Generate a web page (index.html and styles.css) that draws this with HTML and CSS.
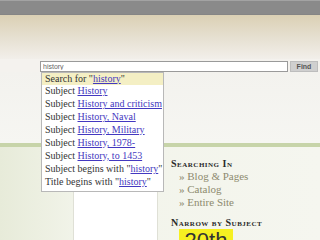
FILE: index.html
```html
<!DOCTYPE html>
<html lang="en">
<head>
<meta charset="UTF-8" />
<meta name="viewport" content="width=device-width, initial-scale=1" />
<title>Library Search</title>
<link rel="stylesheet" href="styles.css">
</head>
<body>
<div class="topbar"></div>
<div class="header"></div>
<form class="search">
  <div class="field">
    <input type="text" class="query" value="history" />
    <ul class="suggest">
      <li class="active">Search for "<a href="#">history</a>"</li>
      <li>Subject <a href="#">History</a></li>
      <li>Subject <a href="#">History and criticism</a></li>
      <li>Subject <a href="#">History, Naval</a></li>
      <li>Subject <a href="#">History, Military</a></li>
      <li>Subject <a href="#">History, 1978-</a></li>
      <li>Subject <a href="#">History, to 1453</a></li>
      <li>Subject begins with "<a href="#">history</a>"</li>
      <li>Title begins with "<a href="#">history</a>"</li>
    </ul>
  </div>
  <button type="button" class="find">Find</button>
</form>
<div class="upper"></div>
<div class="band"></div>
<div class="lower">
  <div class="gutter"></div>
  <div class="panel"></div>
  <div class="sidebar">
    <h3 class="side-title">Searching In</h3>
    <ul class="scope">
      <li>&raquo; Blog &amp; Pages</li>
      <li>&raquo; Catalog</li>
      <li>&raquo; Entire Site</li>
    </ul>
    <h3 class="side-title">Narrow by Subject</h3>
    <div class="tag">20th</div>
  </div>
</div>
</body>
</html>
```

FILE: styles.css
```css
:root {
  --text: #333;
  --link: #4338c0;
  --muted: #8d8a6e;
}
body {
  margin: 0;
  font-family: 'Liberation Serif', 'Times New Roman', serif;
  color: var(--text);
  background: #f7f8f1;
  overflow: hidden;
}
.topbar {
  height: 13px;
  background: #8a8a8a;
  border-top: 1px solid #a3a3a3;
  border-bottom: 1px solid #858585;
}
.header {
  height: 44px;
  background: linear-gradient(#dbd0b4, #e7e1d3 55%, #f2efea);
}
.search {
  display: flex;
  align-items: center;
  gap: 2px;
  height: 12px;
  padding: 1px 0 0 40px;
  background: #f4f2ee;
}
.field {
  position: relative;
  width: 248px;
}
.query {
  display: block;
  box-sizing: border-box;
  width: 100%;
  height: 11px;
  margin: 0;
  padding: 0 2px;
  border: 1px solid #9a9a9a;
  background: #fff;
  font-family: 'Liberation Sans', Arial, sans-serif;
  font-size: 7px;
  color: #666;
}
.find {
  width: 28px;
  height: 11px;
  padding: 0;
  border: 1px solid #bdbdbd;
  background: #cfcfcf;
  font-family: 'Liberation Sans', Arial, sans-serif;
  font-size: 7px;
  font-weight: bold;
  color: #555;
}
.suggest {
  position: absolute;
  top: 11px;
  left: 1px;
  z-index: 2;
  width: 121px;
  margin: 0;
  padding: 0 0 2px;
  list-style: none;
  background: #fff;
  border: 1px solid #b8b8b8;
  font-size: 10px;
  line-height: 12.9px;
}
.suggest li {
  padding-left: 3px;
  white-space: nowrap;
}
.suggest li.active {
  background: #f4efc4;
}
.suggest a {
  color: var(--link);
}
.upper {
  height: 71px;
  background: linear-gradient(#f3f2ee, #f6f6f2);
}
.band {
  height: 4px;
  background: #c7d4a9;
}
.lower {
  display: flex;
  height: 100px;
  background: linear-gradient(90deg, #e7ebd9, #f2f4ea 25%, #f5f6ef);
}
.gutter {
  width: 73px;
}
.panel {
  width: 83px;
  background: #fff;
  border: 1px solid #dfe0d6;
  border-top: none;
}
.sidebar {
  padding: 11px 0 0 13px;
}
.side-title {
  margin: 0;
  font-size: 10px;
  font-variant: small-caps;
  letter-spacing: 0.5px;
  line-height: 12px;
  color: #2a2a2a;
}
.scope {
  margin: 0 0 8px;
  padding: 0 0 0 8px;
  list-style: none;
  font-size: 11px;
  line-height: 13px;
  color: var(--muted);
}
.tag {
  width: 54px;
  margin: 0 0 0 8px;
  background: #f6f021;
  font-family: 'Liberation Sans', Arial, sans-serif;
  font-size: 22px;
  line-height: 24px;
  text-align: center;
  color: #333;
}
```
